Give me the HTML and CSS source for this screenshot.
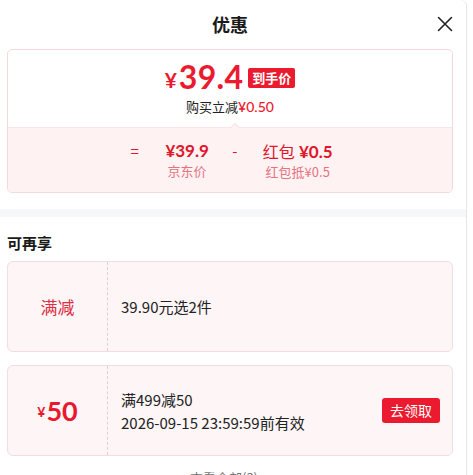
FILE: index.html
```html
<!DOCTYPE html>
<html lang="zh">
<head>
<meta charset="utf-8">
<link rel="stylesheet" href="styles.css">
</head>
<body>
<div class="panel">
  <header class="head">
    <h1 class="title">优惠</h1>
    <svg class="close" width="16" height="16" viewBox="0 0 16 16"><path d="M1.5 1.5 L14.5 14.5 M14.5 1.5 L1.5 14.5" stroke="#222" stroke-width="1.6" fill="none" stroke-linecap="round"/></svg>
  </header>
  <section class="final">
    <div class="final-top">
      <div class="price-line"><span class="yen">¥</span><span class="big">39.4</span><span class="badge">到手价</span></div>
      <div class="reduce">购买立减<span class="red">¥0.50</span></div>
    </div>
    <div class="final-bot">
      <i class="notch"></i>
      <div class="calc">
        <div class="op">=</div>
        <div class="item"><div class="v">¥39.9</div><div class="l">京东价</div></div>
        <div class="op op2">-</div>
        <div class="item"><div class="v"><span class="nm">红包</span> ¥0.5</div><div class="l">红包抵¥0.5</div></div>
      </div>
    </div>
  </section>
  <div class="band"></div>
  <h2 class="sub">可再享</h2>
  <div class="coupon">
    <div class="c-left"><span class="tag">满减</span></div>
    <div class="c-right"><div class="c-line">39.90元选2件</div></div>
  </div>
  <div class="coupon">
    <div class="c-left"><span class="amt"><small>¥</small>50</span></div>
    <div class="c-right">
      <div class="c-text"><div class="c-line">满499减50</div><div class="c-line">2026-09-15 23:59:59前有效</div></div>
      <span class="btn">去领取</span>
    </div>
  </div>
  <div class="more">查看全部(3)</div>
</div>
</body>
</html>
```
FILE: styles.css
```css
* { box-sizing: border-box; }
html, body { margin: 0; padding: 0; background: #fff; }
body { font-family: "Noto Sans CJK SC", "Noto Sans", sans-serif; color: #1a1a1a; overflow: hidden; }
.panel { width: 467px; height: 475px; border-right: 1px solid #e6e6e6; border-top-right-radius: 6px; padding: 0 13px 0 7px; overflow: hidden; }
.head { height: 49px; display: flex; align-items: center; justify-content: center; position: relative; }
.title { margin: 0; font-size: 18px; font-weight: 700; line-height: 1; color: #1a1a1a; margin-top: -2px; }
.close { position: absolute; right: 0; top: 16px; }
.final { border: 1px solid #f5d9dd; border-radius: 5px; overflow: hidden; }
.final-top { height: 77px; display: flex; flex-direction: column; align-items: center; padding-top: 9px; }
.price-line { display: flex; align-items: center; height: 36px; color: #ec1a2e; }
.yen { font-size: 21px; font-weight: 700; margin-right: 2px; margin-top: 4px; font-family: "Lato", "Noto Sans", sans-serif; }
.big { font-size: 32px; font-weight: 700; font-family: "Lato", "Noto Sans", sans-serif; letter-spacing: 0.3px; line-height: 1; }
.badge { margin-left: 5px; background: #ec1a2e; color: #fff; font-size: 13px; font-weight: 700; height: 20px; line-height: 20px; padding: 0 4px; border-radius: 2px; margin-top: 2px; }
.reduce { font-size: 13px; line-height: 18px; margin-top: 3px; color: #222; }
.red { color: #ec1a2e; font-family: "Lato", "Noto Sans", sans-serif; font-size: 14px; font-weight: 500; }
.final-bot { position: relative; background: #fef2f3; border-top: 1px solid #fbe3e6; height: 65px; padding-top: 11px; }
.notch { position: absolute; left: 224px; top: -4px; width: 6px; height: 6px; background: #fef2f3; border-left: 1px solid #fbe3e6; border-top: 1px solid #fbe3e6; transform: rotate(45deg); }
.calc { display: flex; align-items: flex-start; justify-content: center; gap: 0; color: #e0162b; padding-left: 3px; }
.op { font-size: 15px; line-height: 24px; width: 50px; text-align: center; color: #e0162b; }
.calc .op:first-child { width: 35px; text-align: left; }
.calc .op2 { width: 54px; padding-right: 2px; }
.item { display: flex; flex-direction: column; align-items: center; }
.v { font-size: 17px; line-height: 24px; font-weight: 700; font-family: "Lato", "Noto Sans CJK SC", sans-serif; }
.nm { font-weight: 400; font-family: "Noto Sans CJK SC", sans-serif; font-size: 16px; }
.l { font-size: 13px; line-height: 20px; color: #e6737f; margin-top: -2px; }
.band { height: 8px; background: #f6f7f9; margin: 16px -13px 0 -7px; }
.sub { font-size: 15px; font-weight: 700; margin: 15px 0 0; line-height: 22px; color: #1a1a1a; }
.coupon { display: flex; height: 91px; background: #fdf5f6; border: 1px solid #f3dde0; border-radius: 6px; margin-top: 7px; }
.coupon + .coupon { margin-top: 13px; }
.c-left { width: 100px; border-right: 1px dashed #e3cfd2; display: flex; align-items: center; justify-content: center; }
.tag { color: #dc2e45; font-size: 17px; }
.amt { color: #e8182d; font-size: 27px; font-weight: 700; font-family: "Lato", "Noto Sans", sans-serif; }
.amt small { font-size: 14px; margin-right: 1px; vertical-align: 4px; }
.c-right { flex: 1; display: flex; align-items: center; padding: 0 12px 0 13px; }
.c-text { flex: 1; }
.c-line { font-size: 15px; line-height: 23px; color: #222; }
.btn { background: #ec1a2e; color: #fff; font-size: 14px; height: 25px; line-height: 25px; padding: 0 8px; border-radius: 3px; }
.more { text-align: center; margin-top: 12px; font-size: 13px; color: #777; padding-right: 12px; }
```
